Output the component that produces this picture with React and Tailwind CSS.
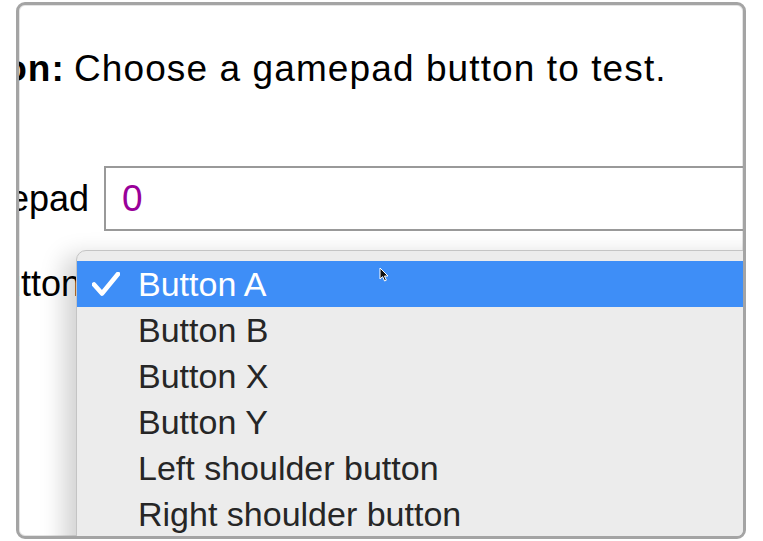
import React from "react";

const items = [
  "Button A",
  "Button B",
  "Button X",
  "Button Y",
  "Left shoulder button",
  "Right shoulder button",
  "Left trigger",
];

const Check = () => (
  <svg width="28" height="24" viewBox="0 0 28 24" className="absolute left-[15px] top-[11px]">
    <path d="M2 12.5 L10 21.5 L26 2" fill="none" stroke="#fff" strokeWidth="4.6" strokeLinecap="round" strokeLinejoin="round" />
  </svg>
);

const Cursor = () => (
  <svg width="12" height="16" viewBox="0 0 12 16" className="absolute left-[360px] top-[262px]">
    <path d="M1 1 L1 12 L3.6 9.6 L5.6 14 L7.4 13.2 L5.5 9 L9 9 Z" fill="#111" stroke="#fff" strokeWidth="1" />
  </svg>
);

const Menu = () => (
  <div className="absolute left-[57px] top-[245px] w-[720px] h-[400px] bg-[#ececec] border border-[#c4c4c4] rounded-tl-[10px] pt-[10px] shadow-[-12px_6px_24px_rgba(0,0,0,0.18)]">
    {items.map((item, i) => (
      <div
        key={item}
        className={`relative h-[46px] leading-[46px] pl-[61px] text-[34px] whitespace-nowrap ${
          i === 0 ? "bg-[#3e8ef7] text-white" : "text-[#262626]"
        }`}
      >
        {i === 0 && <Check />}
        {item}
      </div>
    ))}
  </div>
);

export default function App() {
  return (
    <div className="w-[763px] h-[541px] bg-white pt-[2px] pl-[16px] font-['Liberation_Sans',Arial,sans-serif]">
      <div className="relative w-[730px] h-[537px] border-[3px] border-[#a4a4a4] rounded-[9px] bg-white overflow-hidden shadow-[inset_0_0_0_1px_#e4e4e4]">
        <div className="pt-[46px] text-black">
          <div className="flex items-center h-[36px] text-[37px] tracking-[1.1px] whitespace-nowrap">
            <div className="w-[46px] flex justify-end overflow-hidden shrink-0">
              <span className="font-bold">Instruction:</span>
            </div>
            <span className="ml-[9px]">Choose a gamepad button to test.</span>
          </div>

          <div className="flex items-center mt-[79px] h-[65px]">
            <div className="w-[70px] flex justify-end overflow-hidden shrink-0 text-[36px] whitespace-nowrap">
              <span>Gamepad</span>
            </div>
            <div className="ml-[15px] w-[700px] h-[65px] shrink-0 border-2 border-[#999999] flex items-center pl-[16px] text-[37px] text-[#990099]">
              0
            </div>
          </div>

          <div className="flex items-center mt-[33px] h-[40px]">
            <div className="w-[62px] flex justify-end overflow-hidden shrink-0 text-[36px] whitespace-nowrap">
              <span>Button</span>
            </div>
          </div>
        </div>

        <Menu />
        <Cursor />
      </div>
    </div>
  );
}
